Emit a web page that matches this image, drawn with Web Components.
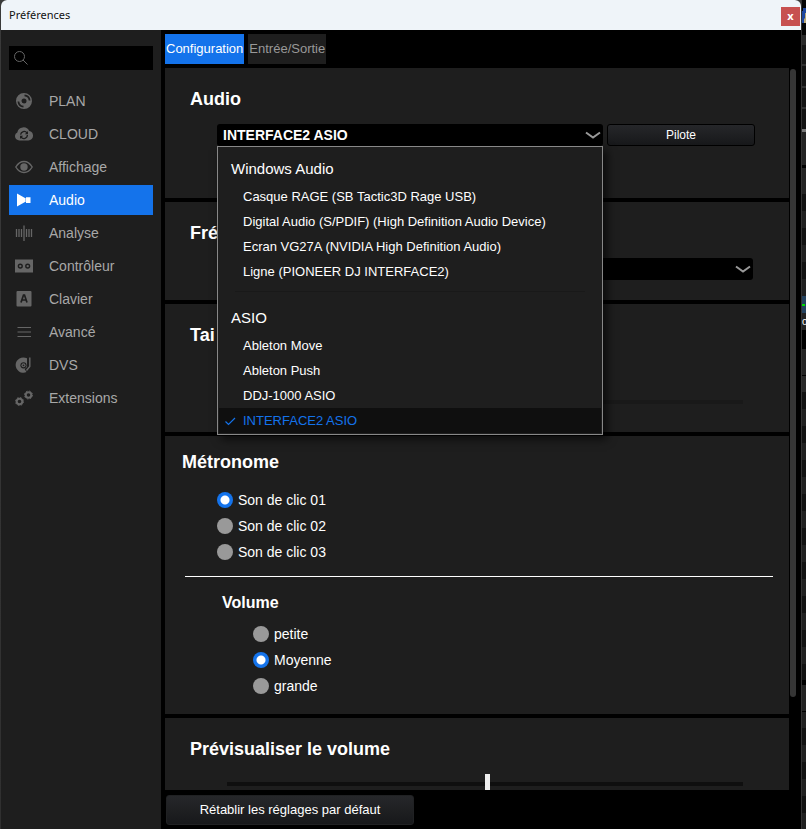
<!DOCTYPE html>
<html lang="fr">
<head>
<meta charset="utf-8">
<title>Préférences</title>
<style>
  html, body { margin: 0; height: 100%; background: #000; }
  body {
    display: grid;
    grid-template-columns: 1px minmax(0, 1fr) 5px;
    overflow: hidden;
    color: #fff;
    font-family: "Liberation Sans", Arial, sans-serif;
    font-size: 14px;
    background: linear-gradient(#3a3a3a, #303030);
  }
</style>
</head>
<body>
<span></span>
<pref-window heading="Préférences">
  <pref-sidebar slot="side">
    <nav-item icon="plan">PLAN</nav-item>
    <nav-item icon="cloud">CLOUD</nav-item>
    <nav-item icon="eye">Affichage</nav-item>
    <nav-item icon="audio" active>Audio</nav-item>
    <nav-item icon="wave">Analyse</nav-item>
    <nav-item icon="controller">Contrôleur</nav-item>
    <nav-item icon="key">Clavier</nav-item>
    <nav-item icon="lines">Avancé</nav-item>
    <nav-item icon="dvs">DVS</nav-item>
    <nav-item icon="gears">Extensions</nav-item>
  </pref-sidebar>
  <tab-item slot="tabs" active>Configuration</tab-item>
  <tab-item slot="tabs">Entrée/Sortie</tab-item>

  <pref-panel heading="Audio" style="--h:130px">
    <device-row>
      <drop-field label="Audio" value="INTERFACE2 ASIO">
        <device-menu></device-menu>
      </drop-field>
      <push-button>Pilote</push-button>
    </device-row>
  </pref-panel>
  <pref-panel heading="Fré" style="--h:98px">
    <drop-field label="Fréquence" value="" style="--w:536px"></drop-field>
  </pref-panel>
  <pref-panel heading="Tai" style="--h:128px;--gap:46px">
    <level-slider label="Taille" max="200" value="60" faint></level-slider>
  </pref-panel>
  <pref-panel heading="Métronome" style="--h:278px;--indent:17px;--gap:14px;--top:15px">
    <radio-list label="Métronome" options="Son de clic 01|Son de clic 02|Son de clic 03" value="0"></radio-list>
    <volume-group></volume-group>
  </pref-panel>
  <pref-panel heading="Prévisualiser le volume" style="--h:128px;--gap:14px">
    <level-slider label="Prévisualiser le volume" max="200" value="101"></level-slider>
  </pref-panel>

  <push-button slot="foot" large>Rétablir les réglages par défaut</push-button>
</pref-window>
<backdrop-strip></backdrop-strip>

<script>
const define = (name, render) => customElements.define(name, class extends HTMLElement {
  constructor() {
    super();
    this.attachShadow({ mode: "open" }).innerHTML = render(this);
  }
});

const icons = {
  plan: `<path fill-rule="evenodd" d="M9 1a8 8 0 1 0 0 16A8 8 0 0 0 9 1Zm0 5.500a2.500 2.500 0 1 1 0 5 2.500 2.500 0 0 1 0-5Z"/><path d="M9.500 3.400A5.600 5.600 0 0 1 14.600 8.500M8.500 14.600A5.600 5.600 0 0 1 3.400 9.500" fill="none" stroke="var(--bg)" stroke-width="1.800"/>`,
  cloud: `<path d="M4.500 15.500A4.300 4.300 0 0 1 0 11.300 3.900 3.900 0 0 1 2.300 7.500 6.300 6.300 0 0 1 14.200 6 4.800 4.800 0 0 1 18 10.800a4.600 4.600 0 0 1-4.600 4.700Z"/><path d="M5.600 9.600a3.600 3.600 0 0 1 6.400-1.800M12.400 10a3.600 3.600 0 0 1-6.400 2.200" fill="none" stroke="var(--bg)" stroke-width="1.300"/><path fill="var(--bg)" d="M13 6v3.200H9.800ZM5 14v-3.200h3.200Z"/>`,
  eye: `<path d="M.8 9C3 5.300 5.800 3.500 9 3.500S15 5.300 17.200 9C15 12.700 12.200 14.500 9 14.500S3 12.700.8 9Z" fill="none" stroke="currentColor" stroke-width="1.400"/><circle cx="9" cy="9" r="3.700"/>`,
  audio: `<path d="M2 2.500v13l8-4.500V7ZM11 6.300h4.500v5.700H11Z"/><path d="M10 7h1v4h-1Z" opacity=".6"/>`,
  wave: `<path d="M1.500 5v8M4 5v8M6.500 5v8M9 1.500v15.500M11.500 5v8M14 5v8M16.500 5v8" fill="none" stroke="currentColor" stroke-width="1.300"/>`,
  controller: `<path fill-rule="evenodd" d="M0 2.500h18v13H0ZM5.300 6.500a2.600 2.600 0 1 0 0 5.200 2.600 2.600 0 0 0 0-5.200Zm7.400 0a2.600 2.600 0 1 0 0 5.200 2.600 2.600 0 0 0 0-5.200Z"/><circle cx="5.300" cy="9.100" r="1.200"/><circle cx="12.700" cy="9.100" r="1.200"/>`,
  key: `<rect x="1.500" y="1" width="15" height="15.500" rx="1"/><path d="M6 12.500 8.500 5h1l2.500 7.500M7 10h4" fill="none" stroke="var(--bg)" stroke-width="1.700"/>`,
  lines: `<path d="M2.500 4.500h13.500M2.500 9h13.500M2.500 13.500h13.500" fill="none" stroke="currentColor" stroke-width="1.200"/>`,
  dvs: `<path d="M12 2.300A7.700 7.700 0 1 0 11.500 16.100L9.600 13.100 12 11Z"/><circle cx="8.500" cy="9.300" r="3.100" fill="var(--bg)"/><circle cx="8.500" cy="9.300" r="2"/><circle cx="8.500" cy="9.300" r=".9" fill="var(--bg)"/><path d="M14.800 1.500V10.500L11.500 14.500" fill="none" stroke="currentColor" stroke-width="1.400"/>`,
  gears: `<g fill="none" stroke="currentColor"><circle cx="4.500" cy="12.500" r="2.800" stroke-width="2"/><circle cx="4.500" cy="12.500" r="4" stroke-width="1" stroke-dasharray="1.600 1.540"/><circle cx="13.500" cy="6" r="2.800" stroke-width="2"/><circle cx="13.500" cy="6" r="4" stroke-width="1" stroke-dasharray="1.600 1.540"/></g>`
};

define("pref-window", el => `
<style>
  :host { display: grid; grid-template-rows: 30px minmax(0, 1fr); height: 100vh; box-sizing: border-box; min-width: 0; background: #000; border-radius: 6px 6px 0 0; overflow: hidden; }
  header { display: flex; align-items: center; justify-content: space-between; background: #eff4f9; padding: 0 1px 0 8px; color: #111; font: 11px/16px "Noto Sans", sans-serif; }
  header button { width: 19px; height: 19px; margin-top: 3px; padding: 0 0 2px; border: 0; background: #c75050; color: #fff; font: bold 11px/14px "Noto Sans", sans-serif; }
  .body { display: grid; grid-template-columns: 160px minmax(0, 1fr); min-height: 0; }
  main { display: flex; flex-direction: column; min-height: 0; padding: 4px 5px 4px 4px; }
  .tabs { display: flex; gap: 4px; margin-bottom: 4px; }
  .view { display: flex; flex: 1; min-height: 0; gap: 1px; }
  .list { flex: 1; min-width: 0; overflow: hidden; display: flex; flex-direction: column; gap: 4px; }
  .bar { width: 6px; }
  .bar i { display: block; height: 87%; margin-top: 1px; border-radius: 3px; background: #353535; }
  .foot { display: flex; padding: 5px 1px 0; }
</style>
<header><span>${el.getAttribute("heading")}</span><button aria-label="Fermer">x</button></header>
<div class="body">
  <slot name="side"></slot>
  <main>
    <div class="tabs"><slot name="tabs"></slot></div>
    <div class="view"><div class="list"><slot></slot></div><div class="bar"><i></i></div></div>
    <div class="foot"><slot name="foot"></slot></div>
  </main>
</div>`);

define("pref-sidebar", () => `
<style>
  :host { display: block; background: #1e1e1e; padding: 16px 8px; }
  label { display: flex; align-items: center; height: 24px; background: #000; padding-left: 4px; margin-bottom: 16px; color: #666; }
  svg { width: 16px; height: 16px; flex: none; }
  input { min-width: 0; flex: 1; border: 0; outline: 0; background: none; color: #fff; }
  nav { display: flex; flex-direction: column; gap: 3px; }
</style>
<label><svg viewBox="0 0 16 16" fill="none" stroke="currentColor"><circle cx="6.500" cy="6.500" r="5"/><path d="m10 10 4.500 4.500"/></svg><input type="text" aria-label="Rechercher"></label>
<nav><slot></slot></nav>`);

define("nav-item", el => `
<style>
  :host { display: block; --bg: #1e1e1e; color: #666; }
  a { display: flex; align-items: center; gap: 16px; height: 30px; padding-left: 6px; color: inherit; text-decoration: none; }
  span { color: #a8a8a8; font-size: 14px; line-height: 16px; }
  svg { width: 18px; height: 18px; flex: none; fill: currentColor; }
  :host([active]) { background: #1473eb; color: #fff; }
  :host([active]) span { color: #fff; }
</style>
<a href="#"><svg viewBox="0 0 18 18">${icons[el.getAttribute("icon")]}</svg><span><slot></slot></span></a>`);

define("tab-item", () => `
<style>
  :host { display: block; }
  button { height: 30px; border: 0; padding: 0 1px; background: #1e1e1e; color: #999; font: 13px/16px "Liberation Sans", Arial, sans-serif; }
  :host([active]) button { background: #1473eb; color: #fff; }
</style>
<button><slot></slot></button>`);

define("pref-panel", el => `
<style>
  :host { display: block; flex: none; box-sizing: border-box; min-height: var(--h); padding: var(--top, 20px) 16px 0 var(--indent, 25px); background: #1e1e1e; }
  h2 { margin: 0 0 var(--gap, 14px); font-size: 18px; line-height: 22px; font-weight: bold; }
  div { padding-left: calc(52px - var(--indent, 25px)); }
</style>
<h2>${el.getAttribute("heading")}</h2>
<div><slot></slot></div>`);

define("device-row", () => `
<style>:host { display: flex; gap: 4px; }</style><slot></slot>`);

define("drop-field", el => `
<style>
  :host { display: block; position: relative; width: var(--w, 386px); height: 22px; }
  select { appearance: none; display: block; width: 100%; height: 22px; border: 0; border-radius: 3px; padding: 0 6px; background: #000; color: #fff; font: bold 14px/22px "Liberation Sans", Arial, sans-serif; }
  svg { position: absolute; right: 2px; top: 7px; width: 16px; height: 9px; pointer-events: none; }
</style>
<select aria-label="${el.getAttribute("label")}"><option>${el.getAttribute("value")}</option></select>
<svg viewBox="0 0 16 9" fill="none" stroke="#999" stroke-width="2"><path d="m1 1.500 7 5 7-5"/></svg>
<slot></slot>`);

define("device-menu", () => `
<style>
  :host { position: absolute; z-index: 2; top: 22px; left: 0; right: 0; box-sizing: border-box; border: 1px solid #888; background: #1e1e1e; padding: 12px 1px 1px; box-shadow: 4px 4px 9px #000a; }
  h3 { margin: 0 0 5px; padding-left: 12px; font-size: 15px; line-height: 20px; font-weight: normal; }
  ul { list-style: none; margin: 0; padding: 0; }
  li { display: flex; align-items: center; height: 25px; padding-left: 24px; font-size: 13px; line-height: 16px; }
  hr { margin: 7px 16px 16px; border: 0; height: 1px; background: #191919; }
  li.on { padding-left: 5px; gap: 6px; background: #0f0f0f; color: #1473eb; }
  svg { width: 13px; height: 12px; }
</style>
<h3>Windows Audio</h3>
<ul>
  <li>Casque RAGE (SB Tactic3D Rage USB)</li>
  <li>Digital Audio (S/PDIF) (High Definition Audio Device)</li>
  <li>Ecran VG27A (NVIDIA High Definition Audio)</li>
  <li>Ligne (PIONEER DJ INTERFACE2)</li>
</ul>
<hr>
<h3>ASIO</h3>
<ul>
  <li>Ableton Move</li>
  <li>Ableton Push</li>
  <li>DDJ-1000 ASIO</li>
  <li class="on"><svg viewBox="0 0 13 12" fill="none" stroke="currentColor" stroke-width="1.200"><path d="m1.500 6.500 3 3L11 3"/></svg>INTERFACE2 ASIO</li>
</ul>`);

define("push-button", () => `
<style>
  :host { display: block; }
  button { display: block; width: 148px; height: 22px; box-sizing: border-box; padding: 0; border: 1px solid #000; border-radius: 3px; background: linear-gradient(#26272a, #17181a); color: #fff; font: 12px/16px "Liberation Sans", Arial, sans-serif; }
  :host([large]) button { width: 248px; height: 30px; border-color: #202123; font-size: 13px; }
</style>
<button><slot></slot></button>`);

define("level-slider", el => `
<style>
  :host { display: block; margin: 0 30px 0 10px; --track: #0f0f0f; --thumb: #eee; }
  :host([faint]) { --track: #191919; }
  input { appearance: none; display: block; width: 100%; height: 20px; margin: 0; background: none; }
  input::-webkit-slider-runnable-track { height: 4px; background: var(--track); }
  input::-webkit-slider-thumb { appearance: none; width: 5px; height: 20px; margin-top: -8px; background: var(--thumb); }
</style>
<input type="range" min="0" max="${el.getAttribute("max")}" value="${el.getAttribute("value")}" aria-label="${el.getAttribute("label")}">`);

define("radio-list", el => `
<style>
  :host { display: flex; flex-direction: column; }
  label { display: flex; align-items: center; gap: 5px; height: 26px; font-size: 14px; line-height: 16px; }
  input { appearance: none; width: 16px; height: 16px; margin: 0; border-radius: 50%; background: #999; }
  input:checked { background: radial-gradient(circle, #fff 4px, #1473eb 5px); }
</style>
${el.getAttribute("options").split("|").map((t, i) => `<label><input type="radio" name="choice"${i == el.getAttribute("value") ? " checked" : ""}><span>${t}</span></label>`).join("")}`);

define("volume-group", () => `
<style>
  :host { display: block; margin-left: -32px; border-top: 1px solid #fff; margin-top: 11px; padding: 16px 0 0 37px; }
  h3 { margin: 0 0 8px; font-size: 16px; line-height: 20px; }
  radio-list { margin-left: 31px; }
</style>
<h3>Volume</h3>
<radio-list label="Volume" options="petite|Moyenne|grande" value="1"></radio-list>`);

const stripes = (n, firstDark) => Array.from({ length: n }, (_, i) => [17, (i % 2 == 0) == firstDark ? "#121212" : "#202020"]);
const rows = [
  [8, "#050505"], [15, "linear-gradient(100deg,#060606 15%,#1d47a0 16% 65%,#b9a878 66%)"], [12, "#050505"], [10, "#2a2a2a"],
  [19, "#161616"], [2, "#303030"], [20, "#131313"], [2, "#303030"], [19, "#131313"], [2, "#303030"], [20, "#131313"],
  [3, "#777"], [33, "#242424"], [3, "#000"], [26, "#242424"],
  ...stripes(6, true), [17, "#24425f", "dot"], [17, "#222", "text"], [19, "#000"], [26, "#242424"], [1, "#000"], [16, "#282828"],
  ...stripes(16, true), [16, "#121212"], [5, "#000"], [26, "#222"], [1, "#000"], [16, "#202020"], ...stripes(6, true)
];
define("backdrop-strip", () => `
<style>
  :host { display: flex; flex-direction: column; height: 100vh; overflow: hidden; border-left: 1px solid #333; box-sizing: border-box; }
  div { flex: none; overflow: hidden; }
  .dot::before { content: ""; display: block; width: 3px; height: 2px; margin-top: 8px; background: #0d0; }
  .text { font: 10px/17px "Liberation Sans", Arial, sans-serif; color: #fff; }
</style>
${rows.map(([h, bg, c]) => `<div class="${c || ""}" style="height:${h}px;background:${bg}">${c == "text" ? "o" : ""}</div>`).join("")}`);
</script>
</body>
</html>
